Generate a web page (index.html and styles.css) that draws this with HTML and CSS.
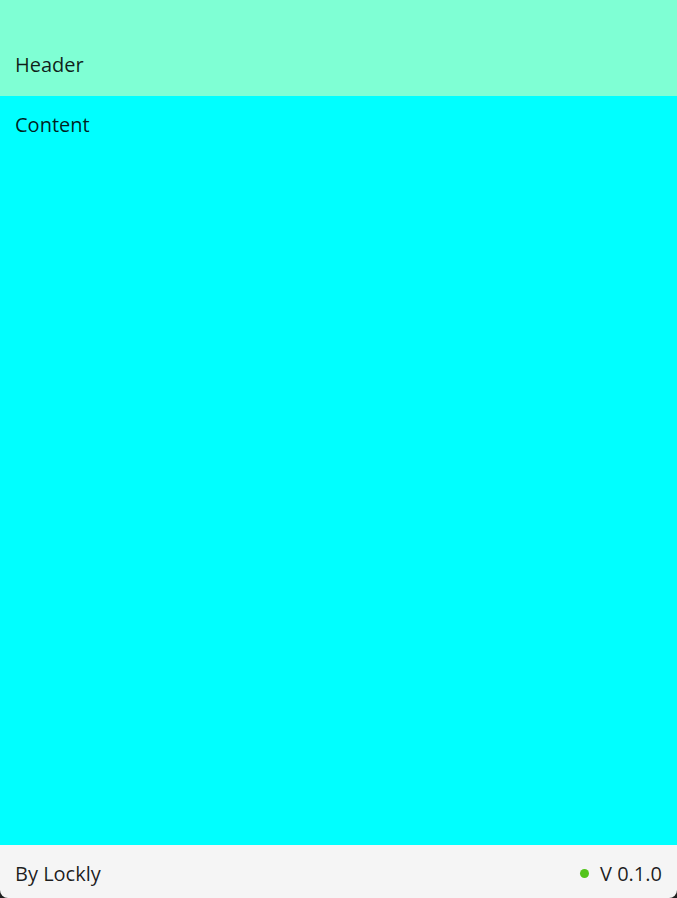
FILE: index.html
```html
<!DOCTYPE html>
<html lang="en">
<head>
<meta charset="utf-8">
<title>Lockly</title>
<link rel="stylesheet" href="styles.css">
</head>
<body>
<div class="app">
  <header class="header"><span>Header</span></header>
  <main class="content"><span>Content</span></main>
  <footer class="footer">
    <span>By Lockly</span>
    <span class="version"><span class="dot"></span>V 0.1.0</span>
  </footer>
</div>
</body>
</html>
```
FILE: styles.css
```css
html, body {
  margin: 0;
  padding: 0;
  height: 100%;
  background: #202020;
}
.app {
  height: 100%;
  display: flex;
  flex-direction: column;
  border-radius: 0 0 8px 8px;
  overflow: hidden;
  font-family: "Open Sans", "Noto Sans", sans-serif;
  font-size: 20px;
  line-height: 27px;
  color: rgba(0, 0, 0, 0.88);
}
.header {
  height: 96px;
  flex: none;
  background: #7fffd4;
  display: flex;
  align-items: flex-end;
  padding: 0 15px 18px;
  box-sizing: border-box;
}
.content {
  flex: 1;
  background: #00ffff;
  padding: 15px 15px;
}
.footer {
  height: 53px;
  flex: none;
  background: #f5f5f5;
  display: flex;
  align-items: center;
  justify-content: space-between;
  padding: 3px 15px 0;
  box-sizing: border-box;
}
.version {
  display: flex;
  align-items: center;
  gap: 11px;
}
.dot {
  width: 9px;
  height: 9px;
  border-radius: 50%;
  background: #52c41a;
  margin-top: 1px;
}
```
